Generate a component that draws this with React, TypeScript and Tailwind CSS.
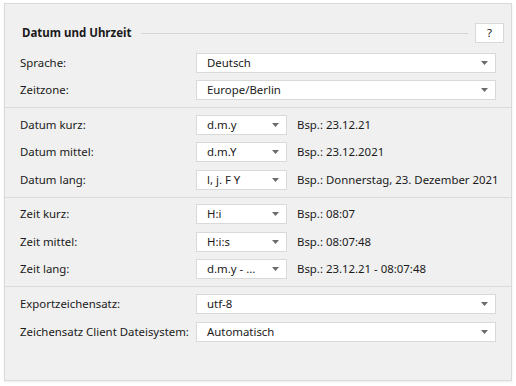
import React from "react";

const font = { fontFamily: '"Segoe UI", "Noto Sans", "Open Sans", sans-serif' };

function Arrow() {
  return (
    <svg width="7" height="4" viewBox="0 0 7 4" className="shrink-0">
      <path d="M0 0 H7 L3.5 4 Z" fill="#6b6b6b" />
    </svg>
  );
}

function Select({ value, small }: { value: string; small?: boolean }) {
  return (
    <div
      className={`flex h-[20px] shrink-0 items-center justify-between border border-[#d9d9d9] bg-white pl-[10px] pr-[7px] text-[11.4px] text-[#1a1a1a] ${
        small ? "w-[91px]" : "w-[300px]"
      }`}
    >
      <span className="whitespace-nowrap leading-none">{value}</span>
      <Arrow />
    </div>
  );
}

function Row({
  label,
  value,
  small,
  example,
  className = "",
}: {
  label: string;
  value: string;
  small?: boolean;
  example?: string;
  className?: string;
}) {
  return (
    <div className={`flex h-[20px] items-center ${className}`}>
      <div className="w-[191px] shrink-0 whitespace-nowrap pl-[15px] text-[11.4px] text-[#1a1a1a]">{label}</div>
      <Select value={value} small={small} />
      {example && <div className="ml-[10px] whitespace-nowrap text-[11.4px] text-[#1a1a1a]">{example}</div>}
    </div>
  );
}

export default function App() {
  return (
    <div className="h-[386px] w-[516px] bg-white pl-[4px] pt-[3px]" style={font}>
      <div className="flex h-[378px] w-[508px] flex-col border border-[#dadada] bg-[#f0f0f0] shadow-[0_1px_2px_rgba(0,0,0,0.08)]">
        <div className="flex h-[39px] items-end">
          <div className="flex h-[20px] w-full items-center pl-[17px] pr-[7px]">
            <span className="text-[11.5px] font-bold text-[#1a1a1a]">Datum und Uhrzeit</span>
            <div className="ml-[10px] mr-[7px] h-px flex-1 bg-[#d4d4d4]" />
            <div className="flex h-[20px] w-[29px] items-center justify-center border border-[#d9d9d9] bg-white text-[11.5px] text-[#1a1a1a]">
              ?
            </div>
          </div>
        </div>
        <div className="flex flex-col pt-[10px] pb-[7px]">
          <Row label="Sprache:" value="Deutsch" />
          <Row label="Zeitzone:" value="Europe/Berlin" className="mt-[7px]" />
        </div>
        <div className="h-px bg-[#dadada]" />
        <div className="flex flex-col pt-[7px] pb-[7px]">
          <Row label="Datum kurz:" value="d.m.y" small example="Bsp.: 23.12.21" />
          <Row label="Datum mittel:" value="d.m.Y" small example="Bsp.: 23.12.2021" className="mt-[7px]" />
          <Row
            label="Datum lang:"
            value="l, j. F Y"
            small
            example="Bsp.: Donnerstag, 23. Dezember 2021"
            className="mt-[8px]"
          />
        </div>
        <div className="h-px bg-[#dadada]" />
        <div className="flex flex-col pt-[6px] pb-[7px]">
          <Row label="Zeit kurz:" value="H:i" small example="Bsp.: 08:07" />
          <Row label="Zeit mittel:" value="H:i:s" small example="Bsp.: 08:07:48" className="mt-[8px]" />
          <Row label="Zeit lang:" value="d.m.y - ..." small example="Bsp.: 23.12.21 - 08:07:48" className="mt-[7px]" />
        </div>
        <div className="h-px bg-[#dadada]" />
        <div className="flex flex-col pt-[7px]">
          <Row label="Exportzeichensatz:" value="utf-8" />
          <Row label="Zeichensatz Client Dateisystem:" value="Automatisch" className="mt-[8px]" />
        </div>
      </div>
    </div>
  );
}
